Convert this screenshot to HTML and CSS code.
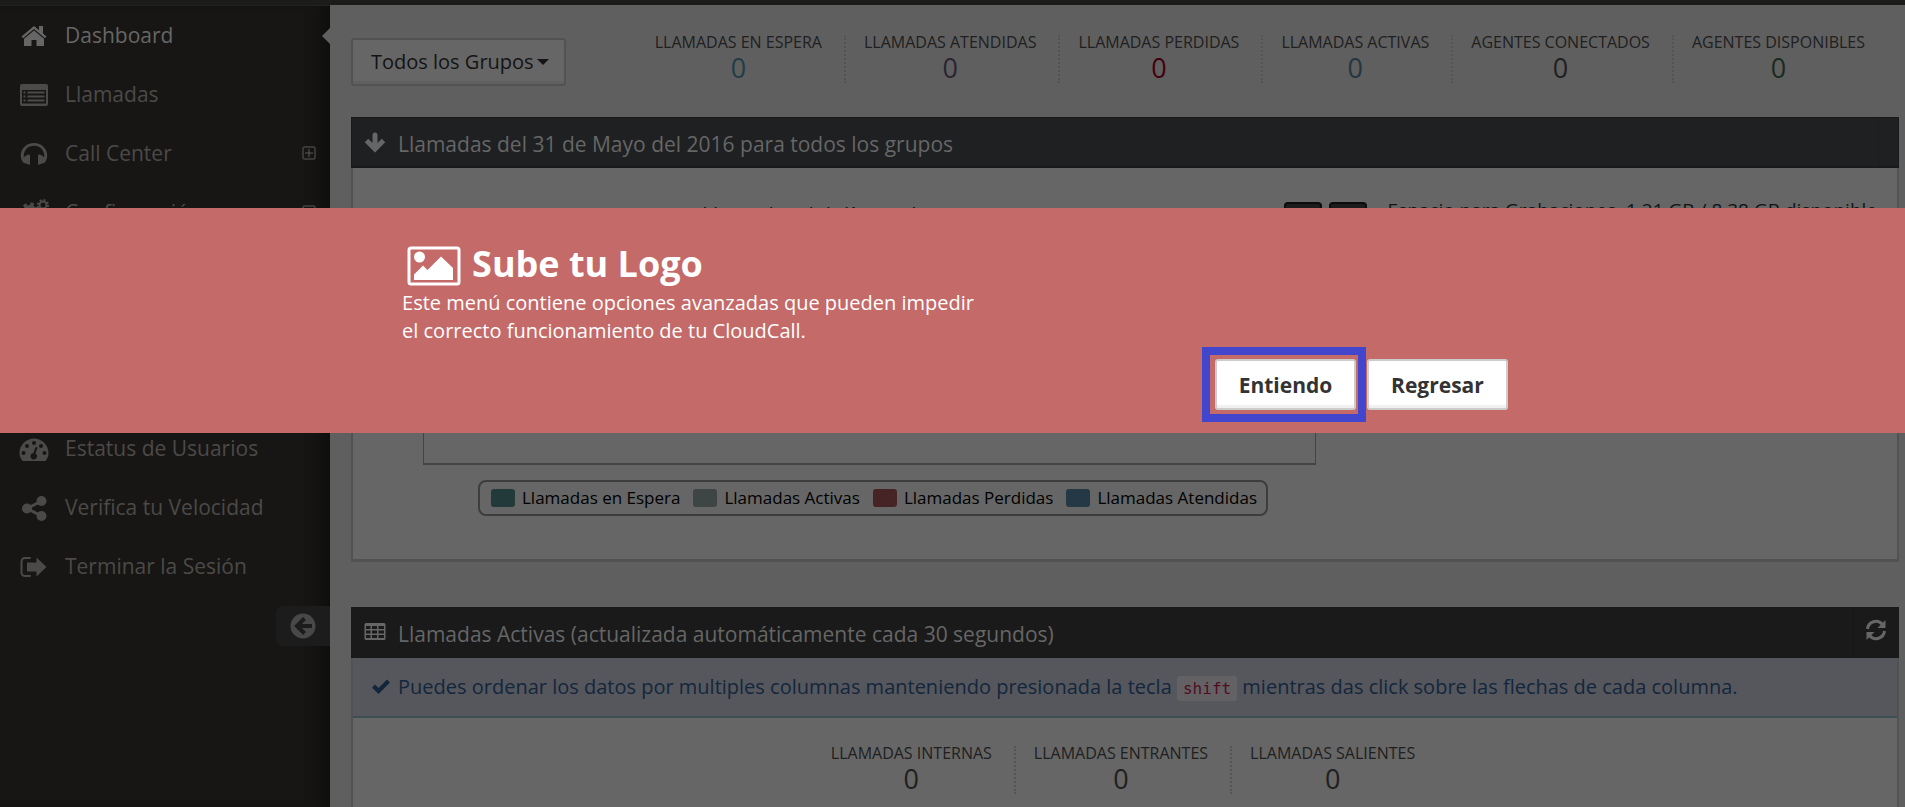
FILE: index.html
```html
<!DOCTYPE html>
<html lang="es">
<head>
<meta charset="utf-8">
<title>CloudCall - Dashboard</title>
<link rel="stylesheet" href="styles.css">
</head>
<body>
<div class="topbar"></div>
<div class="page">
  <aside class="sidebar">
    <nav>
      <ul class="menu">
        <li><a class="menu-link current" href="#">
          <svg class="icon" viewBox="0 0 30 24"><path d="M15 2 2.500 12.500 4 14.200 15 5 26 14.200 27.500 12.500 24 9.500V2h-4v4.200z"/><path d="M15 6.500 5 14.800V22h7.500v-6h5v6H25v-7.200z"/></svg>
          <span>Dashboard</span></a></li>
        <li><a class="menu-link" href="#">
          <svg class="icon" viewBox="0 0 30 24"><path fill-rule="evenodd" d="M3 1h24a2 2 0 0 1 2 2v18a2 2 0 0 1-2 2H3a2 2 0 0 1-2-2V3a2 2 0 0 1 2-2zM3 7v13.500h24V7z"/><path d="M4.500 8.500h2v2h-2zM8.500 8.500h17v2h-17zM4.500 12.500h2v2h-2zM8.500 12.500h17v2h-17zM4.500 16.500h2v2h-2zM8.500 16.500h17v2h-17z"/></svg>
          <span>Llamadas</span></a></li>
        <li><a class="menu-link" href="#">
          <svg class="icon" viewBox="0 0 30 24"><path d="M15 1C7.500 1 1.800 6.500 1.800 13.500c0 3 1 5.700 3 7.500l2.200.500 4 1.500V13l-1.500-.500c-2 .500-3.500 1.500-4.700 3C4 8.500 9 3.800 15 3.800S26 8.500 25.200 15.500c-1.200-1.500-2.700-2.500-4.700-3L19 13v10l4-1.500 2.200-.500c2-1.800 3-4.500 3-7.500C28.200 6.500 22.500 1 15 1z"/></svg>
          <span>Call Center</span>
          <svg class="expand" viewBox="0 0 14 14"><rect x="1" y="1" width="12" height="12" rx="1"/><path d="M3 7h8M7 3v8"/></svg></a></li>
        <li><a class="menu-link" href="#">
          <svg class="icon" viewBox="0 0 30 24"><circle class="cog" cx="11" cy="12" r="5.500"/><circle class="cog-teeth" cx="11" cy="12" r="9"/><circle class="cog-small" cx="24" cy="4" r="3.500"/><circle class="cog-small-teeth" cx="24" cy="4" r="5"/></svg>
          <span>Configuración</span>
          <svg class="expand" viewBox="0 0 14 14"><rect x="1" y="1" width="12" height="12" rx="1"/><path d="M3 7h8M7 3v8"/></svg></a></li>
      </ul>
      <ul class="menu menu-lower">
        <li><a class="menu-link" href="#">
          <svg class="icon" viewBox="0 0 30 24"><path fill-rule="evenodd" d="M3.500 24C1.500 21.500.500 19 .500 16 .500 8 7 1.500 15 1.500S29.500 8 29.500 16c0 3-1 5.500-3 8zM15 4a2 2 0 1 0 0 4 2 2 0 0 0 0-4zM8 7a2 2 0 1 0 0 4 2 2 0 0 0 0-4zM22 7a2 2 0 1 0 0 4 2 2 0 0 0 0-4zM4.500 14a2 2 0 1 0 0 4 2 2 0 0 0 0-4zM25.500 14a2 2 0 1 0 0 4 2 2 0 0 0 0-4zM16.500 10l-2 6a3.300 3.300 0 1 0 2 .500l2-6z"/></svg>
          <span>Estatus de Usuarios</span></a></li>
        <li><a class="menu-link" href="#">
          <svg class="icon" viewBox="0 0 30 24"><circle cx="8" cy="12.500" r="5"/><circle cx="22.500" cy="5" r="5"/><circle cx="22.500" cy="20" r="5"/><path class="share-line" d="M22.500 5 8 12.500 22.500 20"/></svg>
          <span>Verifica tu Velocidad</span></a></li>
        <li><a class="menu-link" href="#">
          <svg class="icon" viewBox="0 0 30 24"><path class="door" d="M11 3H6a3.500 3.500 0 0 0-3.500 3.500v11A3.500 3.500 0 0 0 6 21h5"/><path d="M17.500 2.500 27.500 12 17.500 21.500V16.500H8v-9h9.500z"/></svg>
          <span>Terminar la Sesión</span></a></li>
      </ul>
    </nav>
    <button class="minify" type="button" aria-label="Contraer menú">
      <svg viewBox="0 0 26 26"><circle cx="13" cy="13" r="12.500"/><path d="M22 13H8M14.500 5.500 7 13l7.500 7.500"/></svg>
    </button>
  </aside>

  <main class="content">
    <div class="toolbar">
      <button class="group-button" type="button">Todos los Grupos <span class="caret"></span></button>
      <ul class="stats">
        <li><h5>LLAMADAS EN ESPERA</h5><strong class="teal">0</strong></li>
        <li><h5>LLAMADAS ATENDIDAS</h5><strong class="purple">0</strong></li>
        <li><h5>LLAMADAS PERDIDAS</h5><strong class="red">0</strong></li>
        <li><h5>LLAMADAS ACTIVAS</h5><strong class="blue">0</strong></li>
        <li><h5>AGENTES CONECTADOS</h5><strong>0</strong></li>
        <li><h5>AGENTES DISPONIBLES</h5><strong class="green">0</strong></li>
      </ul>
    </div>

    <section class="widget">
      <header class="widget-head slate">
        <svg class="head-icon" viewBox="0 0 22 22"><path class="arrow" d="M11 4v13"/><path class="arrow-head" d="M2.500 9.500 11 18l8.500-8.500"/></svg>
        <h2>Llamadas del 31 de Mayo del 2016 para todos los grupos</h2>
        <span class="head-tool narrow"></span>
      </header>
      <div class="widget-body chart-body">
        <div class="chart">
          <h3>Llamadas del día por hora</h3>
          <div class="plot"></div>
          <ul class="legend">
            <li><i class="swatch sw-green"></i>Llamadas en Espera</li>
            <li><i class="swatch sw-gray"></i>Llamadas Activas</li>
            <li><i class="swatch sw-red"></i>Llamadas Perdidas</li>
            <li><i class="swatch sw-blue"></i>Llamadas Atendidas</li>
          </ul>
        </div>
        <div class="storage">
          <button class="dark-button" type="button" aria-label="Imprimir"></button>
          <button class="dark-button" type="button" aria-label="Descargar"></button>
          <p>Espacio para Grabaciones, 1.21 GB / 8.38 GB disponible</p>
        </div>
      </div>
    </section>

    <section class="widget widget-last">
      <header class="widget-head black">
        <svg class="head-icon" viewBox="0 0 22 22"><path fill-rule="evenodd" d="M2 2h18a1.500 1.500 0 0 1 1.500 1.500v14A1.500 1.500 0 0 1 20 19H2A1.500 1.500 0 0 1 .500 17.500v-14A1.500 1.500 0 0 1 2 2zM2 5v3h4.500V5zM8 5v3h5V5zM14.500 5v3H20V5zM2 9.500v3h4.500v-3zM8 9.500v3h5v-3zM14.500 9.500v3H20v-3zM2 14v3h4.500v-3zM8 14v3h5v-3zM14.500 14v3H20v-3z"/></svg>
        <h2>Llamadas Activas (actualizada automáticamente cada 30 segundos)</h2>
        <button class="head-tool" type="button" aria-label="Actualizar">
          <svg viewBox="0 0 22 22"><path class="spin" d="M2.500 10A8.500 8.500 0 0 1 17.500 5.500M19.500 12A8.500 8.500 0 0 1 4.500 16.500"/><path d="M20.500 1v8h-8zM1.500 21v-8h8z"/></svg>
        </button>
      </header>
      <div class="widget-body">
        <p class="notice">
          <svg viewBox="0 0 20 18"><path d="M1 9.500 4 6.500 7.500 10 16 1.500l3 3L7.500 16z"/></svg>
          <span>Puedes ordenar los datos por multiples columnas manteniendo presionada la tecla <code>shift</code> mientras das click sobre las flechas de cada columna.</span>
        </p>
        <ul class="stats stats-center">
          <li><h5>LLAMADAS INTERNAS</h5><strong>0</strong></li>
          <li><h5>LLAMADAS ENTRANTES</h5><strong>0</strong></li>
          <li><h5>LLAMADAS SALIENTES</h5><strong>0</strong></li>
        </ul>
      </div>
    </section>
  </main>
</div>

<div class="dialog" role="dialog" aria-labelledby="dialog-title">
  <div class="dialog-inner">
    <h1 id="dialog-title">
      <svg viewBox="0 0 54 40"><rect x="2" y="2" width="50" height="36" rx="2"/><circle cx="12.500" cy="11" r="5.500"/><path d="M7 34v-5.500l9-9 4.500 4.500L34 10.500 46 22v12z"/></svg>
      <span>Sube tu Logo</span>
    </h1>
    <p>Este menú contiene opciones avanzadas que pueden impedir<br>el correcto funcionamiento de tu CloudCall.</p>
    <div class="dialog-actions">
      <span class="highlight"><button class="dialog-button" type="button">Entiendo</button></span>
      <button class="dialog-button" type="button">Regresar</button>
    </div>
  </div>
</div>
</body>
</html>
```
FILE: styles.css
```css
* { box-sizing: border-box; }

body {
  margin: 0;
  min-height: 100vh;
  display: flex;
  flex-direction: column;
  background: #5f5f5f;
  color: #141414;
  font: 20px/30px "Open Sans", "Noto Sans", sans-serif;
}

h1, h2, h3, h5, p, ul { margin: 0; padding: 0; font-weight: 400; }
ul { list-style: none; }
button { font: inherit; cursor: pointer; }

.topbar { height: 5px; background: #1c1c1b; }
.page { display: flex; flex: 1; }

/* Sidebar */
.sidebar {
  width: 330px;
  flex: none;
  background: #171614;
  box-shadow: inset 0 1px 0 #222120, inset -20px 0 16px -12px #0e0e0d;
}
.menu-link {
  position: relative;
  display: flex;
  align-items: center;
  gap: 16px;
  height: 59px;
  padding: 0 14px 0 19px;
  color: #4b4a48;
  font-size: 21px;
  text-decoration: none;
}
.menu-link.current { color: #666; }
.menu-link.current::after {
  content: "";
  position: absolute;
  right: 0;
  top: 23px;
  border: 8px solid transparent;
  border-left: 0;
  border-right-color: #5f5f5f;
}
.icon { width: 30px; height: 24px; margin-top: 2px; fill: currentColor; flex: none; overflow: visible; }
.expand { width: 14px; height: 14px; margin-left: auto; fill: none; stroke: #5c5b59; }
.menu-lower { margin-top: 177px; }
.cog, .cog-small, .cog-teeth, .cog-small-teeth { fill: none; stroke: currentColor; }
.cog { stroke-width: 5; }
.cog-teeth { stroke-width: 3; stroke-dasharray: 3.534 3.534; }
.cog-small { stroke-width: 2; }
.cog-small-teeth { stroke-width: 2; stroke-dasharray: 1.960 1.960; }
.share-line { fill: none; stroke: currentColor; stroke-width: 3; }
.door { fill: none; stroke: currentColor; stroke-width: 2; stroke-linecap: round; }
.minify {
  display: flex;
  align-items: center;
  width: 54px;
  height: 40px;
  margin: 11px 0 0 auto;
  padding: 0 14px;
  border: 0;
  border-radius: 7px 0 0 7px;
  background: #1c1c1c;
}
.minify svg { width: 26px; height: 26px; fill: #484848; flex: none; }
.minify path { fill: none; stroke: #1c1c1c; stroke-width: 4; }

/* Content */
.content { display: flex; flex-direction: column; flex: 1; min-width: 0; padding: 0 6px 0 21px; }
.toolbar { display: flex; justify-content: space-between; height: 112px; padding: 30px 12px 0 0; }
.group-button {
  display: flex;
  align-items: center;
  gap: 3px;
  height: 48px;
  margin-top: 3px;
  padding: 0 15px 0 18px;
  border: 2px solid #525252;
  border-radius: 3px;
  background: #666;
  box-shadow: inset 0 -3px 0 #606060;
  color: #141414;
}
.caret { border: 6px solid transparent; border-top-color: #141414; border-bottom: 0; }
.stats { display: flex; }
.stats li { height: 48px; padding: 0 22px 0 18px; text-align: center; }
.stats li + li { border-left: 2px dotted #545454; }
.stats h5 { font-size: 16px; line-height: 14px; color: #202020; }
.stats strong { display: block; font-size: 27px; font-weight: 400; line-height: 38px; color: #202020; }
.stats .teal { color: #233c47; }
.stats .purple { color: #2c2433; }
.stats .red { color: #43000f; }
.stats .blue { color: #233643; }
.stats .green { color: #1a2c1c; }

.widget { margin-bottom: 45px; }
.widget-last { display: flex; flex-direction: column; flex: 1; margin-bottom: 0; }
.widget-last .widget-body { flex: 1; border-bottom: 0; }
.widget-head {
  display: flex;
  align-items: center;
  gap: 12px;
  height: 51px;
  padding-left: 12px;
  border: 1px solid #191919;
  border-bottom-width: 2px;
  color: #666;
}
.widget-head h2 { padding-top: 3px; font-size: 21px; }
.slate { background: #1f2022; }
.black { background: #1a1a1a; }
.head-icon { width: 22px; height: 22px; fill: currentColor; flex: none; }
.arrow, .arrow-head { fill: none; stroke: currentColor; stroke-width: 5; stroke-linecap: round; }
.arrow-head { stroke-linecap: butt; }
.head-tool {
  display: flex;
  align-items: center;
  align-self: stretch;
  width: 45px;
  margin-left: auto;
  padding: 0 0 4px 11px;
  border: 0;
  border-left: 1px solid #161616;
  background: none;
  color: #666;
}
.head-tool.narrow { width: 20px; padding: 0; border-color: #1b1c1e; }
.head-tool svg { width: 22px; height: 22px; fill: currentColor; }
.spin { fill: none; stroke: currentColor; stroke-width: 3; }
.widget-body { border: 2px solid #525252; border-top: 0; background: #666; }

.chart-body { display: grid; padding: 27px 20px 43px 70px; border-bottom-width: 3px; }
.chart, .storage { grid-area: 1 / 1; }
.chart { width: 893px; }
.chart h3 { margin-top: 6px; padding-right: 80px; font-size: 21px; line-height: 28px; text-align: center; }
.plot { height: 236px; border: 2px solid #444; border-width: 0 1px 2px; }
.legend {
  display: flex;
  gap: 13px;
  width: max-content;
  height: 36px;
  margin: 15px 0 0 55px;
  padding: 0 9px 0 11px;
  align-items: center;
  border: 2px solid #3d3d3d;
  border-radius: 8px;
  color: #000;
  font-size: 17px;
}
.legend li { display: flex; align-items: center; gap: 7px; }
.swatch { width: 24px; height: 18px; border-radius: 3px; }
.sw-green { background: #233a3a; }
.sw-gray { background: #3d4545; }
.sw-red { background: #462426; }
.sw-blue { background: #243845; }
.storage { display: flex; justify-self: end; align-self: start; gap: 7px; white-space: nowrap; }
.storage p { margin-left: 14px; font-size: 19px; }
.dark-button { width: 38px; height: 34px; margin-top: 7px; border: 2px solid #0c0c0c; border-radius: 4px; background: #1c1c1c; }

.notice {
  display: flex;
  align-items: center;
  gap: 7px;
  height: 60px;
  padding-left: 18px;
  border-bottom: 2px solid #3d4d54;
  background: #55575c;
  color: #14263c;
}
.notice svg { width: 20px; height: 18px; fill: currentColor; flex: none; }
.notice code {
  padding: 3px 6px;
  border-radius: 3px;
  background: #636164;
  color: #500e20;
  font: 16px "DejaVu Sans Mono", monospace;
}
.stats-center { justify-content: center; padding-top: 28px; }

/* Dialog */
.dialog {
  position: fixed;
  top: 208px;
  left: 0;
  right: 0;
  height: 225px;
  background: #c46a69;
  color: #fff;
}
.dialog-inner { width: 58%; margin: 0 auto; padding: 36px 0 0 2px; }
.dialog h1 { display: flex; align-items: flex-start; gap: 11px; height: 42px; padding-left: 5px; font-size: 36px; font-weight: 700; line-height: 40px; }
.dialog h1 svg { width: 54px; height: 40px; margin-top: 2px; fill: #fff; }
.dialog h1 rect { fill: none; stroke: #fff; stroke-width: 3; }
.dialog p { margin-top: 3px; line-height: 28px; }
.dialog-actions { display: flex; align-items: center; justify-content: flex-end; gap: 1px; margin: 2px -3px 0 0; }
.highlight { padding: 4px 2px 4px 5px; border: 8px solid #4146cd; }
.dialog-button {
  display: block;
  min-width: 141px;
  height: 51px;
  border: 2px solid #ccc;
  border-radius: 3px;
  background: #fff;
  box-shadow: inset 0 -3px 0 #f0f0f0;
  color: #333;
  font-size: 21px;
  font-weight: 700;
}
```
